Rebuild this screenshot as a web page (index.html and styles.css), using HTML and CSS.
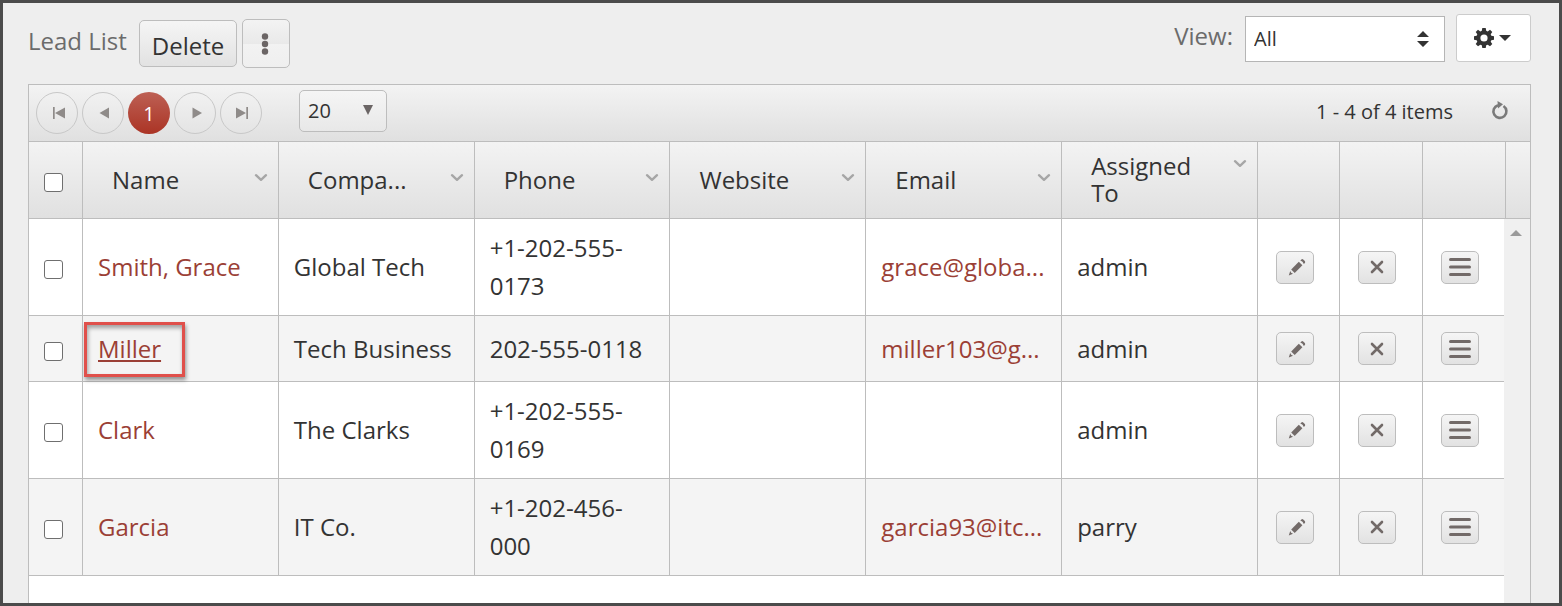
FILE: index.html
```html
<!DOCTYPE html>
<html lang="en">
<head>
<meta charset="utf-8">
<title>Lead List</title>
<link rel="stylesheet" href="styles.css">
</head>
<body>
<svg class="sprites" aria-hidden="true">
  <symbol id="pencil" viewBox="1 1 18 18"><path d="M4.200 12.400 11.800 4.800l3.600 3.500-7.700 7.700z"/><path d="M13.300 3.600l1.100-1.100q.9-.8 1.800 0l1.600 1.600q.8.900.1 1.800l-1.100 1.200q-.8-2.600-3.500-3.500z"/><path d="M3.200 14q.5 2.200 2.800 2.800L1.800 18.400z"/></symbol>
  <symbol id="cross" viewBox="0 0 16 16"><path d="M3 3l10 10M13 3L3 13" fill="none" stroke="currentColor" stroke-width="2.600" stroke-linecap="round"/></symbol>
  <symbol id="bars" viewBox="0 0 22 20"><path d="M1.500 2.500h19M1.500 10h19M1.500 17.500h19" fill="none" stroke="currentColor" stroke-width="3" stroke-linecap="round"/></symbol>
  <symbol id="chevron" viewBox="0 0 14 10"><path d="M2 2.200l5 4.600 5-4.600" fill="none" stroke="currentColor" stroke-width="2.400" stroke-linecap="round" stroke-linejoin="round"/></symbol>
</svg>
<div class="page">
  <header class="toolbar">
    <h1 class="title">Lead List</h1>
    <button class="btn btn-delete" type="button">Delete</button>
    <button class="btn btn-more" type="button" aria-label="More actions">
      <svg width="8" height="24" viewBox="0 0 8 24"><circle cx="4" cy="4.500" r="3.200"/><circle cx="4" cy="12" r="3.200"/><circle cx="4" cy="19.500" r="3.200"/></svg>
    </button>
    <div class="view">
      <label class="view-label" for="view">View:</label>
      <span class="select-wrap view-wrap">
        <select class="select view-select" id="view"><option>All</option></select>
        <svg class="select-icon" width="12" height="16" viewBox="0 0 12 16"><path d="M0 6 6 0l6 6zM0 10h12l-6 6z"/></svg>
      </span>
      <button class="btn-gear" type="button" aria-label="Settings">
        <svg width="20" height="20" viewBox="0 0 20 20"><path fill-rule="evenodd" d="M8.300 0h3.400l.5 2.800 1.500.6L16 1.700 18.300 4l-1.600 2.300.6 1.500 2.700.5v3.400l-2.700.5-.6 1.500 1.600 2.300-2.300 2.300-2.300-1.600-1.500.6-.5 2.700H8.300l-.5-2.700-1.500-.6L4 18.300 1.700 16l1.600-2.300-.6-1.500L0 11.700V8.300l2.700-.5.6-1.500L1.700 4 4 1.700l2.300 1.700 1.500-.6zM10 6.400a3.600 3.600 0 1 0 0 7.200 3.600 3.600 0 0 0 0-7.200z"/></svg>
        <svg width="12" height="6" viewBox="0 0 12 6"><path d="M0 0h12L6 6z"/></svg>
      </button>
    </div>
  </header>
  <main class="grid">
    <div class="pager">
      <nav class="pages" aria-label="Pages">
        <button class="page-btn" type="button" aria-label="First page"><svg width="14" height="12" viewBox="0 0 14 12"><path d="M1 0h1.700v12H1zM13 .5v11L3 6z"/></svg></button>
        <button class="page-btn" type="button" aria-label="Previous page"><svg width="14" height="12" viewBox="0 0 14 12"><path d="M11 .5v11L1.500 6z"/></svg></button>
        <button class="page-btn page-current" type="button" aria-current="page">1</button>
        <button class="page-btn" type="button" aria-label="Next page"><svg width="14" height="12" viewBox="0 0 14 12"><path d="M2.500.5v11L12 6z"/></svg></button>
        <button class="page-btn" type="button" aria-label="Last page"><svg width="14" height="12" viewBox="0 0 14 12"><path d="M0 .5v11L10 6zM10.300 0H12v12h-1.700z"/></svg></button>
      </nav>
      <span class="select-wrap size-wrap">
        <select class="select size-select" aria-label="Items per page"><option>20</option></select>
        <svg class="select-icon" width="12" height="10" viewBox="0 0 12 10"><path d="M1 0h10L6 10z"/></svg>
      </span>
      <span class="count">1 - 4 of 4 items</span>
      <button class="refresh" type="button" aria-label="Refresh">
        <svg width="18" height="20" viewBox="0 0 18 20"><path d="M12.500 5A6.500 6.500 0 1 1 7 4.200" fill="none" stroke="currentColor" stroke-width="2.600"/><path d="M6.500 0 12 3.300 7 7.500z"/></svg>
      </button>
    </div>
    <table class="table head">
      <colgroup><col class="col-check"><col><col><col><col><col><col><col class="col-edit"><col class="col-remove"><col class="col-more-head"><col class="col-end"></colgroup>
      <thead>
        <tr>
          <th class="check"><input type="checkbox" aria-label="Select all"></th>
          <th><div class="th"><span>Name</span><button class="menu" type="button" aria-label="Name menu"><svg width="14" height="10"><use href="#chevron"/></svg></button></div></th>
          <th><div class="th"><span>Compa...</span><button class="menu" type="button" aria-label="Company menu"><svg width="14" height="10"><use href="#chevron"/></svg></button></div></th>
          <th><div class="th"><span>Phone</span><button class="menu" type="button" aria-label="Phone menu"><svg width="14" height="10"><use href="#chevron"/></svg></button></div></th>
          <th><div class="th"><span>Website</span><button class="menu" type="button" aria-label="Website menu"><svg width="14" height="10"><use href="#chevron"/></svg></button></div></th>
          <th><div class="th"><span>Email</span><button class="menu" type="button" aria-label="Email menu"><svg width="14" height="10"><use href="#chevron"/></svg></button></div></th>
          <th><div class="th"><span>Assigned To</span><button class="menu" type="button" aria-label="Assigned To menu"><svg width="14" height="10"><use href="#chevron"/></svg></button></div></th>
          <th></th><th></th><th></th><th></th>
        </tr>
      </thead>
    </table>
    <div class="content">
      <table class="table rows">
        <colgroup><col class="col-check"><col><col><col><col><col><col><col class="col-edit"><col class="col-remove"><col class="col-more"></colgroup>
        <tbody>
          <tr>
            <td class="check"><input type="checkbox" aria-label="Select Smith, Grace"></td>
            <td><a class="link" href="#">Smith, Grace</a></td><td>Global Tech</td><td>+1-202-555-<wbr>0173</td><td></td>
            <td><a class="link" href="#">grace@globa...</a></td><td>admin</td>
            <td class="act"><button class="btn icon icon-edit" type="button" aria-label="Edit"><svg width="18" height="18"><use href="#pencil"/></svg></button></td>
            <td class="act"><button class="btn icon" type="button" aria-label="Delete"><svg width="16" height="16"><use href="#cross"/></svg></button></td>
            <td class="act"><button class="btn icon" type="button" aria-label="More"><svg width="22" height="20"><use href="#bars"/></svg></button></td>
          </tr>
          <tr>
            <td class="check"><input type="checkbox" aria-label="Select Miller"></td>
            <td><a class="link marked" href="#">Miller<span class="callout"></span></a></td><td>Tech Business</td><td>202-555-0118</td><td></td>
            <td><a class="link" href="#">miller103@g...</a></td><td>admin</td>
            <td class="act"><button class="btn icon icon-edit" type="button" aria-label="Edit"><svg width="18" height="18"><use href="#pencil"/></svg></button></td>
            <td class="act"><button class="btn icon" type="button" aria-label="Delete"><svg width="16" height="16"><use href="#cross"/></svg></button></td>
            <td class="act"><button class="btn icon" type="button" aria-label="More"><svg width="22" height="20"><use href="#bars"/></svg></button></td>
          </tr>
          <tr>
            <td class="check"><input type="checkbox" aria-label="Select Clark"></td>
            <td><a class="link" href="#">Clark</a></td><td>The Clarks</td><td>+1-202-555-<wbr>0169</td><td></td>
            <td></td><td>admin</td>
            <td class="act"><button class="btn icon icon-edit" type="button" aria-label="Edit"><svg width="18" height="18"><use href="#pencil"/></svg></button></td>
            <td class="act"><button class="btn icon" type="button" aria-label="Delete"><svg width="16" height="16"><use href="#cross"/></svg></button></td>
            <td class="act"><button class="btn icon" type="button" aria-label="More"><svg width="22" height="20"><use href="#bars"/></svg></button></td>
          </tr>
          <tr>
            <td class="check"><input type="checkbox" aria-label="Select Garcia"></td>
            <td><a class="link" href="#">Garcia</a></td><td>IT Co.</td><td>+1-202-456-<wbr>000</td><td></td>
            <td><a class="link" href="#">garcia93@itc...</a></td><td>parry</td>
            <td class="act"><button class="btn icon icon-edit" type="button" aria-label="Edit"><svg width="18" height="18"><use href="#pencil"/></svg></button></td>
            <td class="act"><button class="btn icon" type="button" aria-label="Delete"><svg width="16" height="16"><use href="#cross"/></svg></button></td>
            <td class="act"><button class="btn icon" type="button" aria-label="More"><svg width="22" height="20"><use href="#bars"/></svg></button></td>
          </tr>
        </tbody>
      </table>
      <div class="scrollbar"><svg width="12" height="6" viewBox="0 0 12 6"><path d="M0 6 6 0l6 6z"/></svg></div>
    </div>
  </main>
</div>
</body>
</html>
```

FILE: styles.css
```css
* { box-sizing: border-box; }

body {
  margin: 0;
  font-family: "Open Sans", "Noto Sans", sans-serif;
  font-size: 24px;
  color: #333;
}

button, select, input { font: inherit; color: inherit; }
svg { display: block; fill: currentColor; }
.sprites { position: absolute; width: 0; height: 0; }

.page {
  min-height: 100vh;
  display: flex;
  flex-direction: column;
  border: 3px solid #4b4b4b;
  background: #eeeeee;
}

/* Toolbar */
.toolbar {
  display: flex;
  align-items: flex-start;
  padding: 11px 28px 0 25px;
  height: 81px;
}
.title {
  margin: 10px 12px 0 0;
  font-size: 24px;
  font-weight: 400;
  line-height: 34px;
  color: #6b6b6b;
  white-space: nowrap;
}
.btn {
  border: 1px solid #bdbdbd;
  border-radius: 5px;
  background: linear-gradient(#f5f5f5, #e2e2e2);
}
.btn-delete {
  margin: 6px 5px 0 0;
  height: 47px;
  padding: 5px 12px 0;
  line-height: 34px;
}
.btn-more {
  margin-top: 5px;
  width: 48px;
  height: 49px;
  padding: 0 2px 0 0;
  display: grid;
  place-items: center;
  color: #6b6565;
  background: linear-gradient(#f3f3f3, #e9e9e9 50%, #f2f2f2 50%, #efefef);
}
.view { display: flex; margin-left: auto; }
.view-label {
  margin: 5px 12px 0 0;
  line-height: 34px;
  color: #6b6b6b;
}
.select-wrap { position: relative; display: block; }
.select {
  appearance: none;
  width: 100%;
  height: 100%;
  padding: 0 8px 2px;
  font-size: 20px;
}
.select-icon { position: absolute; pointer-events: none; }
.view-wrap { width: 200px; height: 46px; margin: 2px 11px 0 0; }
.view-select { border: 1px solid #b5b5b5; border-radius: 0; background: #fff; }
.view-wrap .select-icon { right: 16px; top: 15px; color: #333; }
.btn-gear {
  width: 75px;
  height: 48px;
  padding: 0 2px 0 0;
  display: flex;
  align-items: center;
  justify-content: center;
  gap: 5px;
  border: 1px solid #ccc;
  border-radius: 3px;
  background: #fff;
}

/* Grid */
.grid {
  flex: 1;
  display: flex;
  flex-direction: column;
  margin: 0 28px 0 25px;
  border: 1px solid #bdbdbd;
  border-bottom: 0;
}
.pager {
  display: flex;
  align-items: center;
  height: 57px;
  padding: 0 21px 0 7px;
  border-bottom: 1px solid #bdbdbd;
  background: linear-gradient(#f3f3f3, #e0e0e0);
  font-size: 20px;
}
.pages { display: flex; gap: 4px; }
.page-btn {
  width: 42px;
  height: 42px;
  padding: 0 0 0 4px;
  display: grid;
  place-items: center;
  border: 1px solid #c8c8c8;
  border-radius: 50%;
  background: linear-gradient(#f1f1f1, #e4e4e4);
  color: #8f8b89;
}
.page-current {
  padding: 0;
  border: 0;
  background: linear-gradient(#bd6054, #ab3425);
  color: #fff;
}
.size-wrap { width: 88px; height: 42px; margin: 0 auto 4px 37px; }
.size-select {
  border: 1px solid #bdbdbd;
  border-radius: 5px;
  background: linear-gradient(#f5f5f5, #e8e8e8);
}
.size-wrap .select-icon { right: 13px; top: 15px; color: #6b6565; }
.count { margin-right: 38px; padding-bottom: 4px; }
.refresh {
  padding: 0 0 4px;
  border: 0;
  background: none;
  color: #7a7a7a;
}

.table { width: 100%; border-collapse: separate; border-spacing: 0; table-layout: fixed; }
.col-check { width: 54px; }
.col-edit { width: 82px; }
.col-remove { width: 83px; }
.col-more { width: 81px; }
.col-more-head { width: 83px; }
.col-end { width: 24px; }

th, td {
  border: solid #bdbdbd;
  border-width: 0 1px 1px 0;
  text-align: left;
  font-weight: 400;
}
th:last-child, td:last-child { border-right: 0; }
.head { background: linear-gradient(#f3f3f3, #e0e0e0); }
th { height: 77px; padding: 0 0 2px; }
.th {
  display: flex;
  align-items: flex-start;
  justify-content: space-between;
  gap: 16px;
  padding: 0 10px 0 29px;
  line-height: 27px;
}
.menu {
  padding: 7px 0 0;
  border: 0;
  background: none;
  color: #a6a6a6;
}

.content { flex: 1; display: flex; align-items: stretch; background: #fff; }
.rows { align-self: flex-start; width: calc(100% - 26px); }
td { height: 66px; padding: 10px 15px; line-height: 38px; }
tr:nth-child(even) td { background: #f4f4f4; }
.check { padding: 5px 0 0 15px; }
.check input {
  appearance: none;
  display: block;
  width: 19px;
  height: 19px;
  margin: 0;
  border: 1px solid #6f6f6f;
  border-radius: 3px;
  background: #fff;
}
.act { padding: 0 0 0 18px; }
.icon {
  width: 38px;
  height: 33px;
  padding: 0;
  display: grid;
  place-items: center;
  color: #726a68;
}
.icon-edit { padding-left: 3px; }
.link { color: #9b3f36; text-decoration: none; white-space: nowrap; }
.marked {
  position: relative;
  display: inline-block;
  text-decoration: underline;
}
.callout {
  position: absolute;
  inset: -8px -24px -9px -14px;
  border: 3px solid #e0504b;
  box-shadow: 1px 3px 4px rgba(0, 0, 0, .4), inset 1px 3px 4px rgba(0, 0, 0, .35);
}
.scrollbar {
  flex: none;
  width: 26px;
  padding: 11px 0 0 6px;
  background: #f0f0f0;
  color: #9a9a9a;
}
```
